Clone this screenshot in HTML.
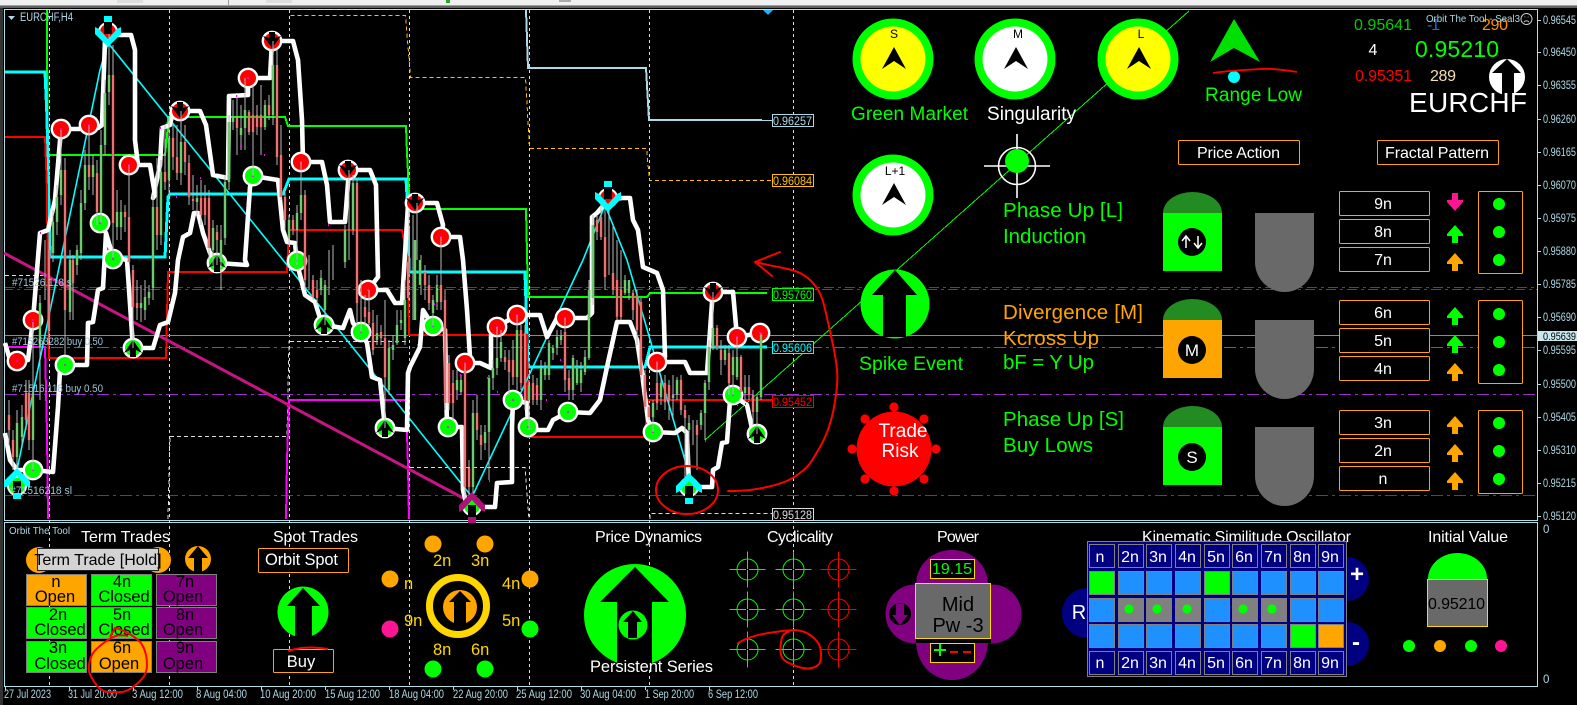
<!DOCTYPE html>
<html><head><meta charset="utf-8"><title>EURCHF Orbit The Tool</title>
<style>
html,body{margin:0;padding:0;background:#000;width:1577px;height:705px;overflow:hidden}
svg{display:block}
text{font-family:"Liberation Sans",sans-serif}
.ax{font-size:11.5px;fill:#add8e6}
.dt{font-size:11.5px;fill:#add8e6}
.t16{font-size:16px;fill:#fff}
.tt{font-size:16px;fill:#fff;text-anchor:middle}
.cell{font-size:16.5px;fill:#000;text-anchor:middle}
.big{font-size:20.5px}
.gn{fill:#00ff00}.or{fill:#ffa500}
.gd{font-size:16.5px;fill:#ffd700}
.kh{font-size:16px;fill:#fff;text-anchor:middle}
</style></head><body>
<svg width="1577" height="705" viewBox="0 0 1577 705" xmlns="http://www.w3.org/2000/svg">
<defs>
<g id="rc"><circle r="9.2" fill="#ff0000" stroke="#fff" stroke-width="2.4"/><circle r="1" fill="#f0f"/></g>
<g id="gc"><circle r="9.2" fill="#00ff00" stroke="#fff" stroke-width="2.4"/><circle r="1" fill="#f0f"/></g>
<g id="rd"><circle r="9.2" fill="#ff0000" stroke="#fff" stroke-width="2.4"/><path d="M-9-5-3-3V-9H3V-3L9-5 0 7Z" fill="#000"/></g>
<g id="gu"><circle r="9.2" fill="#00ff00" stroke="#fff" stroke-width="2.4"/><path d="M-9 5-3 2V9H3V2L9 5 0-8Z" fill="#000"/></g>
<g id="mk"><path d="M-13 13 0 0 13 13V20L9 18 0 8-9 18-13 20Z" fill="currentColor"/><rect x="-4" y="13" width="8" height="12" fill="#000"/><rect x="-4" y="25" width="8" height="6" fill="currentColor"/></g>
<path id="nav" d="M0-12 12 10 0 2-12 10Z" fill="#000"/>
<g id="cg" fill="none" stroke="#00ff00"><circle r="10.5"/><path d="M-18 0H18M0-18V18"/><path d="M-1.5 0H1.5" stroke="#000"/></g>
<g id="cr" fill="none" stroke="#ff0000"><circle r="10.5"/><path d="M-18 0H18M0-18V18"/><path d="M-1.5 0H1.5" stroke="#000"/></g>
<path id="au" d="M0 0 8 9V11H3V18H-3V11H-8V9Z"/>
<path id="bg" fill="none" d="M17 423V457M22 417V437M33 393V440M40 303V347M53 222V253M57 197V222M61 170V195M70 260V312M77 250V265M81 203V253M85 165V203M93 165V177M101 145V213M105 93V145M109 75V92M117 212V227M121 212V227M141 303V308M145 297V310M149 292V298M153 207V288M161 172V235M169 138V180M181 142V173M197 198V202M213 228V250M221 240V262M225 182V238M229 122V182M233 117V122M241 128V135M245 110V128M265 105V127M273 65V115M289 220V238M297 213V230M301 195V213M321 278V290M325 285V310M345 230V262M353 183V230M377 333V340M389 348V390M393 345V350M397 325V343M401 320V323M405 300V338M415 240V320M420 260V285M433 300V313M437 285V302M457 380V390M461 380V392M473 413V487M485 432V443M489 378V432M493 368V378M497 358V368M501 342V358M517 330V377M529 385V400M541 368V400M545 367V375M549 343V375M553 348V353M557 337V348M561 335V340M573 358V390M577 367V383M581 370V383M585 357V372M589 290V358M593 225V298M625 280V293M629 280V293M653 403V417M661 383V397M673 395V398M677 380V395M689 423V430M701 413V425M705 383V413M709 347V382M713 328V347M725 350V360M733 357V375M737 357V377M745 387V393M757 397V412M761 335V397"/>
<path id="br" fill="none" d="M9 415V430M13 440V457M26 393V420M29 393V440M49 250V330M65 170V310M73 260V283M89 165V177M97 173V212M113 75V223M125 212V217M129 217V262M133 270V307M137 303V308M157 207V235M165 172V182M173 138V157M177 157V173M185 142V162M189 163V197M193 199V201M201 198V215M205 198V215M209 198V248M217 232V240M237 118V128M249 112V132M253 115V132M257 115V127M261 115V127M269 105V115M277 65V157M281 155V197M285 197V220M293 220V230M305 195V280M313 280V297M317 290V298M357 183V303M365 307V317M369 312V323M373 323V350M381 332V338M385 338V377M408 262V298M425 272V285M429 285V303M441 285V302M445 300V403M449 363V403M453 383V403M465 370V487M469 468V487M477 413V430M481 435V445M505 357V362M509 360V372M513 360V377M521 330V383M525 333V400M533 383V400M537 385V400M565 332V380M569 378V390M597 220V232M601 217V237M605 237V277M613 273V290M617 280V317M621 290V317M633 293V310M637 295V330M641 302V375M645 375V407M649 407V417M657 383V403M665 383V402M669 385V400M681 380V410M685 410V418M697 425V435M717 328V348M721 350V360M729 353V383M741 357V392M749 387V395M753 395V412"/>
</defs>
<rect width="1577" height="705" fill="#000"/>
<!-- window chrome -->
<rect width="1577" height="5" fill="#f0f0f0"/>
<rect y="5" width="1577" height="1" fill="#a0a0a0"/>
<rect y="6" width="1577" height="2" fill="#606060"/>
<rect x="117" width="26" height="3" fill="#ddd"/><rect x="228" width="1" height="5" fill="#999"/><rect x="266" width="26" height="3" fill="#ddd"/><rect x="446" width="4" height="3" fill="#2a2"/><rect x="559" width="12" height="2" fill="#aaa"/>
<rect y="8" width="3" height="697" fill="#333"/>
<path d="M4.5 9.5H1537.5V520.5H4.5ZM4.5 522.5H1537.5V686.5H4.5Z" fill="none" stroke="#b0e0e6"/>
<!-- vertical dotted -->
<path shape-rendering="crispEdges" d="M49.5 10V686M169.5 10V686M289.5 10V686M409.5 10V686M529.5 10V686M649.5 10V686M793.5 10V686" stroke="#ddd" stroke-dasharray="3 3" fill="none"/>
<!-- horizontal lines -->
<g fill="none" shape-rendering="crispEdges">
<path d="M5 287.5H1537" stroke="#b22222" stroke-dasharray="10 4 3 4"/>
<path d="M5 289.5H1537" stroke="#b22222" stroke-dasharray="10 4 3 4" stroke-dashoffset="2"/>
<path d="M5 347.5H1537M5 394.5H1537" stroke="#9932cc" stroke-dasharray="12 4 3 4"/>
<path d="M5 495.5H1537" stroke="#b22222" stroke-dasharray="12 4 3 4"/>
<path d="M5 335.5H1537" stroke="#1fb0e0"/>
<path d="M705 440 1189 11" stroke="#00ff00" stroke-width="1"/>
<!-- step channels -->
<path d="M526 10 528 68H646L649 120H762" stroke="#add8e6" stroke-width="2"/><path d="M762 120.5H772" stroke="#add8e6"/>
<path d="M290.5 15.5H405.5L410.5 77.5H525.5L529.5 148.5H646.5L649.5 180.5H772" stroke="#ffc000" stroke-dasharray="4 3"/>
<path d="M5 275.5H50M290 341.5H408M170 436.5H287L289 341M168 519 170 436M410 467.5H525L529 519M650 519V513.5H772" stroke="#ddd" stroke-dasharray="4 3"/>
<path d="M47 10 47 43 48 155H165L167 137 168 117H285L288 126H406L407 153 409 193 410 209H526L528 297H647L650 293H767" stroke="#00ff00" stroke-width="2"/>
<path d="M5 72H45L47 117 50 257H165L168 197 170 194H283L289 179H406L408 213 409 272H525L528 367H645L650 347H767" stroke="#00ffff" stroke-width="3"/>
<path d="M5 137H45L47 190 48 320 49 358H166L168 272H287L289 230H402L408 260 409 335H527L528 437H645L648 400H772" stroke="#ff0000" stroke-width="2"/>
<path d="M8 347H40L45 347 47 433 48 519M286 519 287 460 289 400H406L408 467 409 519" stroke="#ff00ff" stroke-width="2"/>
</g>
<g fill="none">
<path d="M4 253 463 498" stroke="#c71585" stroke-width="3"/>
<path d="M17 470 100 70 108 43 283 260 472 497 583 260 605 205 627 260 687 467" stroke="#00ffff" stroke-width="1.6"/>
<!-- white envelopes -->
<path d="M5 343 10 360 17 361 28 360 33 320 40 233 48 230 55 200 61 129H89L98 128 102 125 105 40 108 35H131L135 50 135 140 138 165H150L155 195 153 198 160 165 162 128 170 125 172 115 180 111H200L206 125 213 175 228 178 229 96 248 95V78H270L272 41H293L298 60 302 120 303 162H322L327 185 330 222H345L349 170H370L376 185 378 277 368 290H387L395 303H402L408 205 417 203H437L443 225 441 237H460L463 260 467 310 470 357 465 363H480L491 368 491 335 497 327 517 315H540L547 337 557 318H587L592 313 592 217 597 213 608 200 622 198H630L633 220 638 230 642 260 643 267 657 273 663 290 665 357 657 362H685L690 373H707L712 303 713 292H733L737 337 760 333" stroke="#fff" stroke-width="4.6" stroke-linejoin="round"/>
<path d="M5 433 10 460 17 470 33 470 53 472 58 407 60 370 65 365H87L88 323 93 322 98 290 103 288 106 233 100 223M106 233 113 257 127 260 133 348H153L160 325 168 322 175 293 178 260 183 237 190 233 194 213H198L203 233 210 253 217 263 247 265 245 260 250 187 253 176 278 180 283 230 287 242 295 243 297 263 305 295 315 302 320 318 324 325 343 328 350 310 353 323 361 332 367 343 372 377 380 380 385 428 407 430 408 373 410 367 420 347 423 310 433 326 445 330 447 427H462L463 490 467 507 495 507 497 483 512 482 512 427 513 400 527 403 528 430H548L553 420 568 412 590 413 600 400 607 367 617 322 630 322 637 340 642 373 648 420 653 432 675 433 682 428 687 433 689 487 712 487 713 470 718 467 722 443 727 442 730 400 733 395 747 405 753 433 757 434" stroke="#fff" stroke-width="4.6" stroke-linejoin="round"/>
</g>
<!-- swing circles -->
<use href="#rc" x="17" y="361"/><use href="#rc" x="33" y="320"/><use href="#rc" x="61" y="129"/><use href="#rc" x="89" y="125"/><use href="#rc" x="129" y="165"/><use href="#rd" x="180" y="111"/><use href="#rc" x="248" y="78"/><use href="#rd" x="272" y="41"/><use href="#rc" x="301" y="162"/><use href="#rd" x="348" y="170"/><use href="#rc" x="368" y="290"/><use href="#rd" x="415" y="203"/><use href="#rc" x="441" y="237"/><use href="#rc" x="465" y="363"/><use href="#rc" x="497" y="327"/><use href="#rc" x="517" y="315"/><use href="#rc" x="565" y="318"/><use href="#rc" x="657" y="362"/><use href="#rd" x="713" y="292"/><use href="#rc" x="737" y="337"/><use href="#rc" x="760" y="333"/>
<use href="#gc" x="33" y="470"/><use href="#gc" x="65" y="365"/><use href="#gc" x="100" y="223"/><use href="#gc" x="113" y="259"/><use href="#gu" x="133" y="348"/><use href="#gu" x="217" y="263"/><use href="#gc" x="253" y="176"/><use href="#gc" x="297" y="261"/><use href="#gu" x="324" y="325"/><use href="#gc" x="361" y="332"/><use href="#gu" x="385" y="428"/><use href="#gc" x="433" y="326"/><use href="#gc" x="448" y="427"/><use href="#gc" x="513" y="400"/><use href="#gc" x="528" y="427"/><use href="#gc" x="568" y="412"/><use href="#gc" x="653" y="432"/><use href="#gc" x="733" y="395"/><use href="#gu" x="757" y="434"/>
<circle cx="108" cy="32" r="9" fill="#f00" stroke="#fff" stroke-width="2"/><circle cx="608" cy="198" r="9" fill="#f00" stroke="#fff" stroke-width="2"/>
<circle cx="17" cy="486" r="9" fill="#0f0" stroke="#fff" stroke-width="2"/><circle cx="472" cy="506" r="9" fill="#0f0" stroke="#fff" stroke-width="2"/><circle cx="689" cy="487" r="9" fill="#0f0" stroke="#fff" stroke-width="2"/>
<!-- candles -->
<path fill="none" stroke="#b8b8b8" shape-rendering="crispEdges" d="M9 400V445M13 430V470M17 410V470M22 405V445M26 380V430M29 380V450M33 322V470M40 295V400M45 240V300M49 240V345M53 210V262M57 185V235M61 130V205M65 158V355M70 250V320M73 255V320M77 245V275M81 190V260M85 150V210M89 125V190M93 155V195M97 160V225M101 130V223M105 80V155M109 32V105M113 45V257M117 190V240M121 200V240M125 205V232M129 165V262M133 265V348M137 280V320M141 285V322M145 280V320M149 285V305M153 195V300M157 158V250M161 160V245M165 125V190M169 118V195M173 125V170M177 125V180M181 111V185M185 125V175M189 155V205M193 175V210M197 185V215M201 180V225M205 185V225M209 190V260M213 220V265M217 225V265M221 225V290M225 175V245M229 115V190M233 100V130M237 95V155M241 105V150M245 78V150M249 110V135M253 85V176M257 105V135M261 85V155M265 100V130M269 95V120M273 41V125M277 50V165M281 125V200M285 190V230M289 215V245M293 215V235M297 205V265M301 162V220M305 190V290M309 255V290M313 275V300M317 280V305M321 270V295M325 280V325M329 250V295M333 245V280M345 225V268M349 170V260M353 175V235M357 178V325M361 280V332M365 295V325M369 290V325M373 310V355M377 315V345M381 325V345M385 300V428M389 340V395M393 335V360M397 310V345M401 310V330M405 280V345M409 210V300M413 215V320M417 203V260M421 255V295M425 265V300M429 275V310M433 295V326M437 275V310M441 237V310M445 290V410M449 355V410M453 370V420M457 370V400M461 375V395M465 363V500M469 460V500M473 400V500M477 395V440M481 425V460M485 425V450M489 375V480M493 360V390M497 327V375M501 330V362M505 350V370M509 350V395M513 340V385M517 315V390M521 325V390M525 325V410M529 380V430M533 375V405M537 378V405M541 360V410M545 362V380M549 340V380M553 345V360M557 330V355M561 330V345M565 318V392M569 370V400M573 355V400M577 360V385M581 362V392M585 350V375M589 280V360M593 215V305M597 215V240M601 205V240M605 200V290M609 210V275M613 225V295M617 240V320M621 250V320M625 275V295M629 280V300M633 290V320M637 290V345M641 298V380M645 370V410M649 405V420M653 400V432M657 362V410M661 375V405M665 375V410M669 380V420M673 375V420M677 377V400M681 375V415M685 405V480M689 415V465M693 420V445M697 420V470M701 410V430M705 380V440M709 340V390M713 292V350M717 325V350M721 340V375M725 345V365M729 345V395M733 350V395M737 337V380M741 355V395M745 375V400M749 375V400M753 390V425M757 395V434M761 333V400"/>
<use href="#bg" stroke="#1fb51f" stroke-width="2.6"/>
<use href="#br" stroke="#e82020" stroke-width="2.6"/>
<use href="#bg" stroke="#dcdcdc" stroke-width=".9"/>
<use href="#br" stroke="#dcdcdc" stroke-width=".9"/>
<path fill="none" stroke="#ff00ff" stroke-width="2" d="M40 233h1M160 128h1M240 146h1M264 155h1M176 197h1M200 178h1M236 96h1M328 225h1M434 304h1M417 345h1M437 287h1M460 375h1M487 378h1M497 392h1M546 400h1M560 360h1M617 317h1M705 441h1M737 405h1M745 404h1M649 316h1M400 401h1M489 481h1"/>
<!-- arrow markers -->
<g color="#00ffff"><use href="#mk" x="17" y="468"/><use href="#mk" x="689" y="473"/>
<use href="#mk" transform="translate(108 47) scale(1 -1)"/><use href="#mk" transform="translate(608 212) scale(1 -1)"/></g>
<g color="#b0107a"><use href="#mk" x="472" y="492"/></g>
<!-- chart labels -->
<g font-size="11" fill="#9fc5d8">
<text x="20" y="21" style="font-size:11.5px;fill:#add8e6" textLength="53" lengthAdjust="spacingAndGlyphs">EURCHF,H4</text>
<text x="12" y="286" textLength="62" lengthAdjust="spacingAndGlyphs">#71526.118 sl</text>
<text x="12" y="345" textLength="91" lengthAdjust="spacingAndGlyphs">#715263282 buy 0.50</text>
<text x="12" y="392" textLength="91" lengthAdjust="spacingAndGlyphs">#71516.118 buy 0.50</text>
<text x="10" y="494" textLength="62" lengthAdjust="spacingAndGlyphs">#71516218 sl</text>
</g>
<path d="M8 16H15L11.5 20Z" fill="#add8e6"/>
<path d="M763 10H773L768 15Z" fill="#1eb0f0"/>
<!-- price tags -->
<g fill="#000" font-size="12">
<rect x="772.5" y="114.5" width="41" height="12" stroke="#add8e6"/><text x="773" y="125" style="fill:#add8e6" textLength="39" lengthAdjust="spacingAndGlyphs">0.96257</text>
<rect x="772.5" y="174.5" width="41" height="12" stroke="#ffc000"/><text x="773" y="185" style="fill:#ffc000" textLength="39" lengthAdjust="spacingAndGlyphs">0.96084</text>
<rect x="772.5" y="288.5" width="41" height="12" stroke="#00ff00"/><text x="773" y="299" style="fill:#00ff00" textLength="39" lengthAdjust="spacingAndGlyphs">0.95760</text>
<rect x="772.5" y="341.5" width="41" height="12" stroke="#00ffff"/><text x="773" y="352" style="fill:#00ffff" textLength="39" lengthAdjust="spacingAndGlyphs">0.95606</text>
<rect x="772.5" y="395.5" width="41" height="12" stroke="#ff0000"/><text x="773" y="406" style="fill:#ff0000" textLength="39" lengthAdjust="spacingAndGlyphs">0.95452</text>
<rect x="772.5" y="508.5" width="41" height="12" stroke="#ddd"/><text x="773" y="519" style="fill:#ddd" textLength="39" lengthAdjust="spacingAndGlyphs">0.95128</text>
</g>
<!-- hand drawn red -->
<g fill="none" stroke="#ff0000" stroke-width="2" stroke-linecap="round" stroke-linejoin="round">
<path d="M780 252 755 262 772 276M755 262C770 266 790 268 800 273S820 288 824 305 830 330 834 350 838 380 836 395 830 430 820 447 810 465 800 473 780 484 767 487 745 491 728 491"/>
<ellipse cx="687" cy="490" rx="31" ry="24"/>
</g>
<!-- top circles -->
<g>
<circle cx="893" cy="59" r="40.5" fill="#00ff00"/><circle cx="893" cy="59" r="32.5" fill="#ffff00"/><use href="#nav" x="894" y="59"/>
<circle cx="1015" cy="59" r="40.5" fill="#00ff00"/><circle cx="1015" cy="59" r="32.5" fill="#fff"/><use href="#nav" x="1016" y="59"/>
<circle cx="1138" cy="59" r="40.5" fill="#00ff00"/><circle cx="1138" cy="59" r="32.5" fill="#ffff00"/><use href="#nav" x="1139" y="59"/>
<circle cx="893" cy="195" r="40.5" fill="#00ff00"/><circle cx="893" cy="195" r="32.5" fill="#fff"/><use href="#nav" x="894" y="195"/>
<g font-size="12" fill="#000" text-anchor="middle"><text x="894" y="38">S</text><text x="1018" y="38">M</text><text x="1141" y="38">L</text><text x="895" y="175">L+1</text></g>
</g>
<text x="851" y="120" font-size="19" fill="#00ff00" textLength="117">Green Market</text>
<text x="987" y="120" font-size="19" fill="#fff" textLength="89">Singularity</text>
<!-- crosshair -->
<g fill="none" stroke="#fff" stroke-width="1.6"><circle cx="1017" cy="166" r="18.5"/><path d="M984 166H1050M1017 134V198"/></g>
<circle cx="1017" cy="161" r="12" fill="#00ff00"/>
<!-- Range Low -->
<path d="M1234 19 1260 62 1234 48 1210 62Z" fill="#00e000"/>
<circle cx="1234" cy="77" r="6" fill="#00ffff"/>
<path d="M1213 73C1225 71 1245 70 1260 69S1290 71 1297 72" fill="none" stroke="#f00" stroke-width="1.8"/>
<text x="1205" y="101" font-size="19" fill="#00ff00" textLength="97">Range Low</text>
<!-- top right numbers -->
<g font-size="16">
<text x="1354" y="30" fill="#00d000" textLength="58">0.95641</text>
<text x="1427" y="30" fill="#1e70d0" textLength="13" style="font-size:16px">-1</text>
<text x="1482" y="30" fill="#ff9000" textLength="26">290</text>
<text x="1373" y="55" fill="#fff" text-anchor="middle">4</text>
<text x="1415" y="57" fill="#00ff00" style="font-size:23px" textLength="84">0.95210</text>
<text x="1355" y="81" fill="#ff0000" textLength="57">0.95351</text>
<text x="1430" y="81" fill="#f5deb3" textLength="26">289</text>
</g>
<text x="1426" y="22" font-size="10.5" fill="#add8e6" textLength="94" lengthAdjust="spacingAndGlyphs">Orbit The Tool - Seal3</text>
<g fill="none" stroke="#ccc" stroke-width="1"><circle cx="1526.5" cy="19" r="5.5"/><path d="M1524 22Q1526.5 19.5 1529 22M1524.5 17h.8M1527.7 17h.8"/></g>
<circle cx="1507" cy="77" r="18" fill="#fff"/>
<path d="M1507 59 1521 73H1514V95H1502V73H1492Z" fill="#000"/>
<text x="1409" y="112" font-size="28" fill="#fff" textLength="118">EURCHF</text>
<!-- header boxes -->
<g fill="#000" stroke="#ffa500"><rect x="1178.5" y="140.5" width="121" height="24" rx="1"/><rect x="1377.5" y="140.5" width="121" height="24" rx="1"/></g>
<text x="1197" y="158" class="t16" textLength="83">Price Action</text>
<text x="1385" y="158" class="t16" textLength="104">Fractal Pattern</text>
<!-- phase texts -->
<g class="big" font-size="20.5">
<text x="1003" y="217" class="gn" textLength="120">Phase Up [L]</text>
<text x="1003" y="243" class="gn" textLength="83">Induction</text>
<text x="1003" y="319" class="or" textLength="140">Divergence [M]</text>
<text x="1003" y="345" class="or" textLength="96">Kcross Up</text>
<text x="1003" y="369" class="gn" textLength="91">bF = Y Up</text>
<text x="1003" y="426" class="gn" textLength="121">Phase Up [S]</text>
<text x="1003" y="452" class="gn" textLength="90">Buy Lows</text>
</g>
<!-- Spike -->
<circle cx="895" cy="304" r="34.5" fill="#00ff00"/>
<path d="M895 270 917 295H906V337H883V295H872Z" fill="#000"/>
<text x="859" y="370" font-size="19.5" fill="#00ff00" textLength="104">Spike Event</text>
<!-- Trade risk -->
<g fill="#ff0000"><circle cx="894" cy="449" r="37.5"/><circle cx="894" cy="407" r="4.6"/><circle cx="924" cy="419" r="4.6"/><circle cx="936" cy="449" r="4.6"/><circle cx="924" cy="479" r="4.6"/><circle cx="894" cy="491" r="4.6"/><circle cx="865" cy="479" r="4.6"/><circle cx="852" cy="449" r="4.6"/><circle cx="865" cy="419" r="4.6"/></g>
<text x="903" y="437" font-size="19" fill="#fff" text-anchor="middle">Trade</text>
<text x="900" y="457" font-size="19" fill="#fff" text-anchor="middle">Risk</text>
<!-- locks -->
<g>
<path d="M1163 213A29.5 21 0 0 1 1222 213Z" fill="#228b22"/><rect x="1163" y="213" width="59" height="58" fill="#00ff00"/>
<path d="M1163 320A29.5 21 0 0 1 1222 320Z" fill="#228b22"/><rect x="1163" y="320" width="59" height="58" fill="#ffa500"/>
<path d="M1163 427A29.5 21 0 0 1 1222 427Z" fill="#228b22"/><rect x="1163" y="427" width="59" height="58" fill="#00ff00"/>
<circle cx="1192" cy="242" r="14" fill="#000"/><circle cx="1192" cy="350" r="14" fill="#000"/><circle cx="1192" cy="457" r="14" fill="#000"/>
<path d="M1186 248V237M1182 241 1186 236 1190 241M1198 236V247M1194 243 1198 248 1202 243" fill="none" stroke="#fff" stroke-width="1.5"/>
<text x="1192" y="356" font-size="17" fill="#fff" text-anchor="middle">M</text>
<text x="1192" y="463" font-size="17" fill="#fff" text-anchor="middle">S</text>
</g>
<!-- gray shapes -->
<g fill="#696969">
<path d="M1255 213H1314V262A29.5 30 0 0 1 1255 262Z"/>
<path d="M1255 320H1314V369A29.5 30 0 0 1 1255 369Z"/>
<path d="M1255 427H1314V476A29.5 30 0 0 1 1255 476Z"/>
</g>
<!-- fractal boxes -->
<g fill="#000" stroke="#ffa500">
<rect x="1339.5" y="191.5" width="90" height="24" rx="1"/><rect x="1339.5" y="219.5" width="90" height="24" rx="1"/><rect x="1339.5" y="247.5" width="90" height="24" rx="1"/>
<rect x="1339.5" y="300.5" width="90" height="24" rx="1"/><rect x="1339.5" y="328.5" width="90" height="24" rx="1"/><rect x="1339.5" y="356.5" width="90" height="24" rx="1"/>
<rect x="1339.5" y="410.5" width="90" height="24" rx="1"/><rect x="1339.5" y="438.5" width="90" height="24" rx="1"/><rect x="1339.5" y="466.5" width="90" height="24" rx="1"/>
<rect x="1478.5" y="191.5" width="44" height="82" rx="1"/><rect x="1478.5" y="300.5" width="44" height="83" rx="1"/><rect x="1478.5" y="410.5" width="44" height="83" rx="1"/>
</g>
<g>
<text x="1383" y="209" class="tt">9n</text><text x="1383" y="237" class="tt">8n</text><text x="1383" y="265" class="tt">7n</text>
<text x="1383" y="318" class="tt">6n</text><text x="1383" y="346" class="tt">5n</text><text x="1383" y="374" class="tt">4n</text>
<text x="1383" y="428" class="tt">3n</text><text x="1383" y="456" class="tt">2n</text><text x="1383" y="484" class="tt">n</text>
</g>
<g fill="#00ff00"><circle cx="1499" cy="204" r="6"/><circle cx="1499" cy="232" r="6"/><circle cx="1499" cy="260" r="6"/><circle cx="1499" cy="314" r="6"/><circle cx="1499" cy="342" r="6"/><circle cx="1499" cy="370" r="6"/><circle cx="1499" cy="423" r="6"/><circle cx="1499" cy="451" r="6"/><circle cx="1499" cy="479" r="6"/></g>
<use href="#au" transform="translate(1455 211) scale(1 -1)" fill="#ff1493"/>
<g fill="#00ff00"><use href="#au" x="1455" y="225"/><use href="#au" x="1455" y="307"/><use href="#au" x="1455" y="335"/></g>
<g fill="#ffa500"><use href="#au" x="1455" y="253"/><use href="#au" x="1455" y="363"/><use href="#au" x="1455" y="416"/><use href="#au" x="1455" y="444"/><use href="#au" x="1455" y="472"/></g>
<!-- Right axis -->
<g stroke="#b0e0e6" shape-rendering="crispEdges"><path d="M1537 20.5H1541M1537 52.5H1541M1537 85.5H1541M1537 119.5H1541M1537 152.5H1541M1537 185.5H1541M1537 218.5H1541M1537 251.5H1541M1537 284.5H1541M1537 317.5H1541M1537 350.5H1541M1537 384.5H1541M1537 417.5H1541M1537 450.5H1541M1537 483.5H1541M1537 516.5H1541"/></g>
<g>
<text class="ax" x="1543" y="24" textLength="33" lengthAdjust="spacingAndGlyphs">0.96545</text>
<text class="ax" x="1543" y="56" textLength="33" lengthAdjust="spacingAndGlyphs">0.96450</text>
<text class="ax" x="1543" y="89" textLength="33" lengthAdjust="spacingAndGlyphs">0.96355</text>
<text class="ax" x="1543" y="123" textLength="33" lengthAdjust="spacingAndGlyphs">0.96260</text>
<text class="ax" x="1543" y="156" textLength="33" lengthAdjust="spacingAndGlyphs">0.96165</text>
<text class="ax" x="1543" y="189" textLength="33" lengthAdjust="spacingAndGlyphs">0.96070</text>
<text class="ax" x="1543" y="222" textLength="33" lengthAdjust="spacingAndGlyphs">0.95975</text>
<text class="ax" x="1543" y="255" textLength="33" lengthAdjust="spacingAndGlyphs">0.95880</text>
<text class="ax" x="1543" y="288" textLength="33" lengthAdjust="spacingAndGlyphs">0.95785</text>
<text class="ax" x="1543" y="321" textLength="33" lengthAdjust="spacingAndGlyphs">0.95690</text>
<text class="ax" x="1543" y="354" textLength="33" lengthAdjust="spacingAndGlyphs">0.95595</text>
<text class="ax" x="1543" y="388" textLength="33" lengthAdjust="spacingAndGlyphs">0.95500</text>
<text class="ax" x="1543" y="421" textLength="33" lengthAdjust="spacingAndGlyphs">0.95405</text>
<text class="ax" x="1543" y="454" textLength="33" lengthAdjust="spacingAndGlyphs">0.95310</text>
<text class="ax" x="1543" y="487" textLength="33" lengthAdjust="spacingAndGlyphs">0.95215</text>
<text class="ax" x="1543" y="520" textLength="33" lengthAdjust="spacingAndGlyphs">0.95120</text>
<text class="ax" x="1543" y="533">0</text>
<text class="ax" x="1543" y="683">0</text>
</g>
<rect x="1538" y="331" width="39" height="10" fill="#c8e8f0"/>
<text x="1543" y="340" font-size="11" fill="#000" textLength="33" lengthAdjust="spacingAndGlyphs">0.95639</text>
<!-- date axis -->
<path d="M5.5 686V690M69.5 686V690M133.5 686V690M197.5 686V690M261.5 686V690M325.5 686V690M389.5 686V690M453.5 686V690M517.5 686V690M581.5 686V690M645.5 686V690M709.5 686V690" stroke="#b0e0e6"/>
<g>
<text class="dt" x="4" y="698" textLength="47" lengthAdjust="spacingAndGlyphs">27 Jul 2023</text>
<text class="dt" x="68" y="698" textLength="49" lengthAdjust="spacingAndGlyphs">31 Jul 20:00</text>
<text class="dt" x="132" y="698" textLength="51" lengthAdjust="spacingAndGlyphs">3 Aug 12:00</text>
<text class="dt" x="196" y="698" textLength="51" lengthAdjust="spacingAndGlyphs">8 Aug 04:00</text>
<text class="dt" x="260" y="698" textLength="56" lengthAdjust="spacingAndGlyphs">10 Aug 20:00</text>
<text class="dt" x="325" y="698" textLength="55" lengthAdjust="spacingAndGlyphs">15 Aug 12:00</text>
<text class="dt" x="389" y="698" textLength="55" lengthAdjust="spacingAndGlyphs">18 Aug 04:00</text>
<text class="dt" x="453" y="698" textLength="55" lengthAdjust="spacingAndGlyphs">22 Aug 20:00</text>
<text class="dt" x="516" y="698" textLength="56" lengthAdjust="spacingAndGlyphs">25 Aug 12:00</text>
<text class="dt" x="580" y="698" textLength="56" lengthAdjust="spacingAndGlyphs">30 Aug 04:00</text>
<text class="dt" x="645" y="698" textLength="49" lengthAdjust="spacingAndGlyphs">1 Sep 20:00</text>
<text class="dt" x="708" y="698" textLength="50" lengthAdjust="spacingAndGlyphs">6 Sep 12:00</text>
</g>
<!-- subwindow -->
<text x="9" y="534" font-size="10.5" fill="#add8e6" textLength="61" lengthAdjust="spacingAndGlyphs">Orbit The Tool</text>
<g>
<text class="t16" x="81" y="542" textLength="89">Term Trades</text>
<text class="t16" x="273" y="542" textLength="85">Spot Trades</text>
<text class="t16" x="595" y="542" textLength="107">Price Dynamics</text>
<text class="t16" x="767" y="542" textLength="66">Cyclicality</text>
<text class="t16" x="937" y="542" textLength="42">Power</text>
<text class="t16" x="1142" y="542" textLength="209">Kinematic Similitude Oscillator</text>
<text class="t16" x="1428" y="542" textLength="80">Initial Value</text>
</g>
<circle cx="39" cy="560" r="13" fill="#ffa500"/><circle cx="158" cy="560" r="13" fill="#ffa500"/>
<rect x="37.5" y="548.5" width="121" height="22" fill="#d3d3d3" stroke="#222"/>
<text x="98" y="565" font-size="16" fill="#000" text-anchor="middle">Term Trade [Hold]</text>
<circle cx="198" cy="559" r="13" fill="#ffa500"/>
<path d="M198 546 208 558H202V572H194V558H188Z" fill="#000"/>
<!-- trade grid -->
<g stroke="#808080">
<rect x="26.5" y="574.5" width="60" height="31" fill="#ffa500"/><rect x="91.5" y="574.5" width="60" height="31" fill="#00ff00"/><rect x="156.5" y="574.5" width="60" height="31" fill="#800080"/>
<rect x="26.5" y="607.5" width="60" height="31" fill="#00ff00"/><rect x="91.5" y="607.5" width="60" height="31" fill="#00ff00"/><rect x="156.5" y="607.5" width="60" height="31" fill="#800080"/>
<rect x="26.5" y="641.5" width="60" height="31" fill="#00ff00"/><rect x="91.5" y="641.5" width="60" height="31" fill="#ffa500"/><rect x="156.5" y="641.5" width="60" height="31" fill="#800080"/>
</g>
<g>
<text class="cell" x="56" y="587">n</text><text class="cell" x="55" y="602">Open</text>
<text class="cell" x="122" y="587">4n</text><text class="cell" x="124" y="602">Closed</text>
<text class="cell" x="185" y="587">7n</text><text class="cell" x="183" y="602">Open</text>
<text class="cell" x="58" y="620">2n</text><text class="cell" x="60" y="635">Closed</text>
<text class="cell" x="122" y="620">5n</text><text class="cell" x="124" y="635">Closed</text>
<text class="cell" x="185" y="620">8n</text><text class="cell" x="183" y="635">Open</text>
<text class="cell" x="58" y="653">3n</text><text class="cell" x="60" y="669">Closed</text>
<text class="cell" x="122" y="653">6n</text><text class="cell" x="119" y="669">Open</text>
<text class="cell" x="185" y="653">9n</text><text class="cell" x="183" y="669">Open</text>
</g>
<path d="M110 637 115 628C125 630 132 635 138 640S147 655 147 665 142 680 133 687 118 692 110 692 98 688 93 680 88 668 90 660 97 648 105 642 118 634 128 636" fill="none" stroke="#f00" stroke-width="2"/>
<!-- spot -->
<rect x="258.5" y="548.5" width="90" height="24" rx="1" fill="#000" stroke="#ffa500"/>
<text x="265" y="565" font-size="16.5" fill="#fff" textLength="73">Orbit Spot</text>
<circle cx="303" cy="612" r="25.5" fill="#00ff00"/>
<path d="M303 588 320 606H312V638H295V606H287Z" fill="#000"/>
<rect x="273.5" y="649.5" width="60" height="23" rx="1" fill="#000" stroke="#ffa500"/>
<text x="301" y="667" font-size="16.5" fill="#fff" text-anchor="middle">Buy</text>
<path d="M288 651C298 648 308 646 328 649" fill="none" stroke="#f00" stroke-width="2"/>
<!-- orbit -->
<g fill="#ffa500"><circle cx="390" cy="579" r="8.5"/><circle cx="433" cy="544" r="8.5"/><circle cx="485" cy="544" r="8.5"/><circle cx="530" cy="579" r="8.5"/></g>
<g fill="#00ff00"><circle cx="530" cy="629" r="8.5"/><circle cx="433" cy="669" r="8.5"/><circle cx="485" cy="669" r="8.5"/></g>
<circle cx="390" cy="629" r="8.5" fill="#ff1493"/>
<g>
<text class="gd" x="433" y="566">2n</text><text class="gd" x="471" y="566">3n</text><text class="gd" x="502" y="589">4n</text><text class="gd" x="404" y="589">n</text><text class="gd" x="404" y="626">9n</text><text class="gd" x="502" y="626">5n</text><text class="gd" x="433" y="655">8n</text><text class="gd" x="471" y="655">6n</text>
</g>
<circle cx="458" cy="606" r="28.5" fill="none" stroke="#ffd700" stroke-width="7"/>
<circle cx="460" cy="607" r="17" fill="#ffa500"/>
<path d="M460 591 471 602H466V624H454V602H449Z" fill="#000"/>
<!-- price dynamics -->
<circle cx="635" cy="615" r="51" fill="#00ff00"/>
<path d="M635 567 669 602H652V668H617V602H600Z" fill="#000"/>
<circle cx="633" cy="625" r="14.5" fill="#00ff00"/>
<path d="M633 611 642 622H637V638H628V622H623Z" fill="#000"/>
<text x="590" y="672" font-size="16.5" fill="#fff" textLength="123">Persistent Series</text>
<!-- cyclicality -->
<use href="#cg" x="747.5" y="569.5"/><use href="#cg" x="793.5" y="569.5"/><use href="#cr" x="838.5" y="569.5"/>
<use href="#cg" x="747.5" y="609.5"/><use href="#cg" x="793.5" y="609.5"/><use href="#cr" x="838.5" y="609.5"/>
<use href="#cg" x="747.5" y="649.5"/><use href="#cg" x="793.5" y="649.5"/><use href="#cr" x="838.5" y="649.5"/>
<path d="M737 644C745 638 760 634 775 632S800 628 810 635 821 648 821 655 820 666 812 668 795 666 787 662 780 650 781 642 785 633 790 631" fill="none" stroke="#f00" stroke-width="2"/>
<!-- power -->
<g fill="#800080">
<path d="M916 585C916 565 932 550 952 550S988 565 988 585Z"/>
<path d="M916 640C916 664 932 680 952 680S988 664 988 640Z"/>
<circle cx="915" cy="614" r="29.5"/><circle cx="992" cy="614" r="29.5"/>
</g>
<rect x="916" y="638" width="75" height="5" fill="#000"/>
<rect x="915.5" y="583.5" width="75" height="55" fill="#696969" stroke="#ffd700"/>
<text x="958" y="611" font-size="20" fill="#000" text-anchor="middle">Mid</text>
<text x="958" y="632" font-size="20" fill="#000" text-anchor="middle">Pw -3</text>
<rect x="930.5" y="559.5" width="44" height="19" fill="#000" stroke="#ffd700"/>
<text x="932" y="574" font-size="16" fill="#00ff00" textLength="40">19.15</text>
<rect x="930.5" y="643.5" width="44" height="19" fill="#000" stroke="#ffd700"/>
<path d="M934 650H946M940 644V656" stroke="#00ff00" stroke-width="2"/>
<path d="M950 652H958M963 652H971" stroke="#f00" stroke-width="2"/>
<circle cx="900" cy="614" r="11" fill="#000"/>
<path d="M900 625 908 615H904V604H896V615H892Z" fill="#800080"/>
<!-- Kinematic -->
<circle cx="1087" cy="613" r="25" fill="#000080"/>
<text x="1079" y="619" font-size="20" fill="#fff" text-anchor="middle">R</text>
<circle cx="1347" cy="579" r="22" fill="#000080"/><circle cx="1347" cy="644" r="22" fill="#000080"/>
<text x="1357" y="582" font-size="24" font-weight="bold" fill="#fff" text-anchor="middle">+</text>
<text x="1356" y="650" font-size="24" font-weight="bold" fill="#fff" text-anchor="middle">-</text>
<rect x="1087.5" y="541.5" width="259" height="135" fill="#000080" stroke="#808080"/>
<g stroke="#808080" fill="#000080">
<rect x="1089.5" y="544.5" width="25" height="23"/><rect x="1118.5" y="544.5" width="25" height="23"/><rect x="1146.5" y="544.5" width="25" height="23"/><rect x="1175.5" y="544.5" width="25" height="23"/><rect x="1204.5" y="544.5" width="25" height="23"/><rect x="1232.5" y="544.5" width="25" height="23"/><rect x="1261.5" y="544.5" width="25" height="23"/><rect x="1290.5" y="544.5" width="25" height="23"/><rect x="1318.5" y="544.5" width="25" height="23"/>
<rect x="1089.5" y="651.5" width="25" height="23"/><rect x="1118.5" y="651.5" width="25" height="23"/><rect x="1146.5" y="651.5" width="25" height="23"/><rect x="1175.5" y="651.5" width="25" height="23"/><rect x="1204.5" y="651.5" width="25" height="23"/><rect x="1232.5" y="651.5" width="25" height="23"/><rect x="1261.5" y="651.5" width="25" height="23"/><rect x="1290.5" y="651.5" width="25" height="23"/><rect x="1318.5" y="651.5" width="25" height="23"/>
</g>
<g fill="#1e90ff" stroke="#808080">
<rect x="1089.5" y="571.5" width="25" height="23" fill="#00ff00"/><rect x="1118.5" y="571.5" width="25" height="23"/><rect x="1146.5" y="571.5" width="25" height="23"/><rect x="1175.5" y="571.5" width="25" height="23"/><rect x="1204.5" y="571.5" width="25" height="23" fill="#00ff00"/><rect x="1232.5" y="571.5" width="25" height="23"/><rect x="1261.5" y="571.5" width="25" height="23"/><rect x="1290.5" y="571.5" width="25" height="23"/><rect x="1318.5" y="571.5" width="25" height="23"/>
<rect x="1089.5" y="598.5" width="25" height="23"/><rect x="1118.5" y="598.5" width="25" height="23" fill="#808080"/><rect x="1146.5" y="598.5" width="25" height="23" fill="#808080"/><rect x="1175.5" y="598.5" width="25" height="23" fill="#808080"/><rect x="1204.5" y="598.5" width="25" height="23"/><rect x="1232.5" y="598.5" width="25" height="23" fill="#808080"/><rect x="1261.5" y="598.5" width="25" height="23" fill="#808080"/><rect x="1290.5" y="598.5" width="25" height="23"/><rect x="1318.5" y="598.5" width="25" height="23"/>
<rect x="1089.5" y="624.5" width="25" height="23"/><rect x="1118.5" y="624.5" width="25" height="23"/><rect x="1146.5" y="624.5" width="25" height="23"/><rect x="1175.5" y="624.5" width="25" height="23"/><rect x="1204.5" y="624.5" width="25" height="23"/><rect x="1232.5" y="624.5" width="25" height="23"/><rect x="1261.5" y="624.5" width="25" height="23"/><rect x="1290.5" y="624.5" width="25" height="23" fill="#00ff00"/><rect x="1318.5" y="624.5" width="25" height="23" fill="#ffa500"/>
</g>
<g fill="#00ff00"><circle cx="1129" cy="609" r="4.6"/><circle cx="1157" cy="609" r="4.6"/><circle cx="1187" cy="609" r="4.6"/><circle cx="1243" cy="609" r="4.6"/><circle cx="1272" cy="609" r="4.6"/></g>
<g>
<text class="kh" x="1100" y="562">n</text><text class="kh" x="1130" y="562">2n</text><text class="kh" x="1158" y="562">3n</text><text class="kh" x="1187" y="562">4n</text><text class="kh" x="1216" y="562">5n</text><text class="kh" x="1244" y="562">6n</text><text class="kh" x="1273" y="562">7n</text><text class="kh" x="1302" y="562">8n</text><text class="kh" x="1330" y="562">9n</text>
<text class="kh" x="1100" y="668">n</text><text class="kh" x="1130" y="668">2n</text><text class="kh" x="1158" y="668">3n</text><text class="kh" x="1187" y="668">4n</text><text class="kh" x="1216" y="668">5n</text><text class="kh" x="1244" y="668">6n</text><text class="kh" x="1273" y="668">7n</text><text class="kh" x="1302" y="668">8n</text><text class="kh" x="1330" y="668">9n</text>
</g>
<!-- Initial value -->
<path d="M1428 579A29.5 26 0 0 1 1487 579Z" fill="#00ff00"/>
<rect x="1427.5" y="579.5" width="60" height="47" fill="#696969" stroke="#ffd700"/>
<text x="1428" y="609" font-size="16" fill="#000" textLength="57">0.95210</text>
<circle cx="1409" cy="646" r="6" fill="#00ff00"/><circle cx="1440" cy="646" r="6" fill="#ffa500"/><circle cx="1471" cy="646" r="6" fill="#00ff00"/><circle cx="1501" cy="646" r="6" fill="#ff1493"/>
</svg>
</body></html>
